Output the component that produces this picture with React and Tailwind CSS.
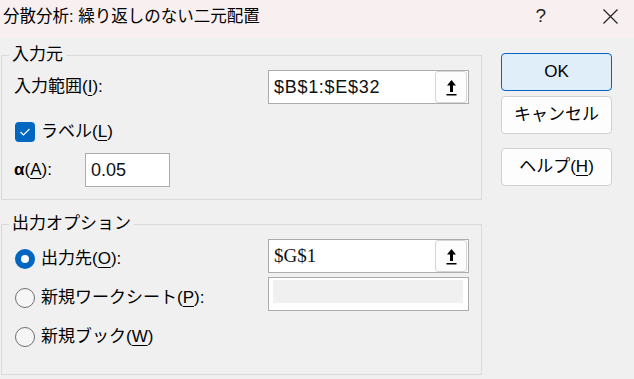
import React from "react";

const UpIcon = () => (
    <svg width="11" height="17" viewBox="0 0 11 17">
        <path d="M5.5 1 L10 6.5 L7 6.5 L7 13 L4 13 L4 6.5 L1 6.5 Z" fill="#000" />
        <rect x="0.5" y="15" width="10" height="1.5" fill="#000" />
    </svg>
);

const RefButton = () => (
    <div className="ml-auto mr-[1px] w-[32px] h-[32px] flex items-center justify-center bg-[#fdfdfd] border border-[#d6d6d6] rounded-[3px]">
        <UpIcon />
    </div>
);

const Radio = ({ checked }) =>
    checked ? (
        <div className="w-[20px] h-[20px] rounded-full bg-[#0067c0] flex items-center justify-center">
            <div className="w-[8px] h-[8px] rounded-full bg-white" />
        </div>
    ) : (
        <div className="w-[20px] h-[20px] rounded-full border border-[#6f6f6f] bg-[#f6f6f6]" />
    );

const App = () => {
    return (
        <div className="w-[634px] h-[379px] bg-[#f0f0f0] overflow-hidden text-black font-['Liberation_Sans','Noto_Sans_CJK_JP',sans-serif] text-[17px]">
            {/* title bar */}
            <div className="h-[38px] bg-[#f8eff0] flex items-start pt-[5px] pl-[3px] pr-[16px]">
                <span className="leading-[22px] text-[16.5px]">分散分析: 繰り返しのない二元配置</span>
                <span className="ml-auto leading-[22px] text-[19px] font-light text-[#222]">?</span>
                <svg className="ml-[57px] mt-[4px]" width="15" height="15" viewBox="0 0 15 15">
                    <path d="M0.5 0.5 L14.5 14.5 M14.5 0.5 L0.5 14.5" stroke="#222" strokeWidth="1.2" />
                </svg>
            </div>

            <div className="flex pl-[1px]">
                <div className="w-[481px] flex flex-col">
                    <fieldset className="mt-[7px] border border-[#dadada] pl-[7px] pr-[12px] pt-[5px] pb-[12px]">
                        <legend className="px-[3px] leading-[20px]">入力元</legend>
                        <div className="flex items-center h-[34px]">
                            <span className="pl-[5px] leading-[20px]">
                                入力範囲(<span className="underline underline-offset-[3px]">I</span>):
                            </span>
                            <div className="ml-auto w-[201px] h-[34px] border border-[#acacac] bg-white flex items-center">
                                <span className="pl-[5px] text-[18px] tracking-[0.7px] text-[#111]">$B$1:$E$32</span>
                                <RefButton />
                            </div>
                        </div>
                        <div className="flex items-center h-[20px] mt-[18px] pl-[6px]">
                            <div className="w-[20px] h-[20px] rounded-[4px] bg-[#0067c0] flex items-center justify-center">
                                <svg width="12" height="10" viewBox="0 0 12 10">
                                    <path d="M1.5 5 L4.5 8 L10.5 2" stroke="#fff" strokeWidth="1.1" fill="none" />
                                </svg>
                            </div>
                            <span className="ml-[6px] leading-[20px]">
                                ラベル(<span className="underline underline-offset-[3px]">L</span>)
                            </span>
                        </div>
                        <div className="flex items-center h-[34px] mt-[11px]">
                            <span className="w-[76px] pl-[5px] leading-[20px]">
                                <span className="font-semibold">α</span>(<span className="underline underline-offset-[3px]">A</span>):
                            </span>
                            <div className="w-[85px] h-[34px] border border-[#acacac] bg-white flex items-center">
                                <span className="pl-[5px] text-[18px] text-[#111]">0.05</span>
                            </div>
                        </div>
                    </fieldset>

                    <fieldset className="mt-[14px] border border-[#dadada] pl-[7px] pr-[12px] pt-[5px] pb-[27px]">
                        <legend className="px-[3px] leading-[20px]">出力オプション</legend>
                        <div className="flex">
                            <div className="flex flex-col pt-[10px] pl-[6px] gap-[19px]">
                                <div className="flex items-center h-[20px]">
                                    <Radio checked />
                                    <span className="ml-[6px] leading-[20px]">
                                        出力先(<span className="underline underline-offset-[3px]">O</span>):
                                    </span>
                                </div>
                                <div className="flex items-center h-[20px]">
                                    <Radio />
                                    <span className="ml-[6px] leading-[20px]">
                                        新規ワークシート(<span className="underline underline-offset-[3px]">P</span>):
                                    </span>
                                </div>
                                <div className="flex items-center h-[20px]">
                                    <Radio />
                                    <span className="ml-[6px] leading-[20px]">
                                        新規ブック(<span className="underline underline-offset-[3px]">W</span>)
                                    </span>
                                </div>
                            </div>
                            <div className="ml-auto w-[201px] flex flex-col gap-[4px]">
                                <div className="h-[34px] border border-[#acacac] bg-white flex items-center">
                                    <span className="pl-[5px] text-[19px] font-['Liberation_Serif',serif] text-[#111]">$G$1</span>
                                    <RefButton />
                                </div>
                                <div className="h-[34px] border border-[#acacac] bg-white pl-[4px] pr-[5px] pt-[2px]">
                                    <div className="h-[23px] bg-[#f0f0f0]" />
                                </div>
                            </div>
                        </div>
                    </fieldset>
                </div>

                <div className="ml-[19px] pt-[15px] w-[111px] flex flex-col">
                    <button className="h-[38px] rounded-[4px] border border-[#0067c0] bg-[#e0eef9] text-[17px] leading-[20px]">OK</button>
                    <button className="mt-[5px] h-[38px] rounded-[4px] border border-[#d0d0d0] bg-[#fdfdfd] text-[17px] leading-[20px]">キャンセル</button>
                    <button className="mt-[14px] h-[38px] rounded-[4px] border border-[#d0d0d0] bg-[#fdfdfd] text-[17px] leading-[20px]">
                        ヘルプ(<span className="underline underline-offset-[3px]">H</span>)
                    </button>
                </div>
            </div>
        </div>
    );
};

export default App;
